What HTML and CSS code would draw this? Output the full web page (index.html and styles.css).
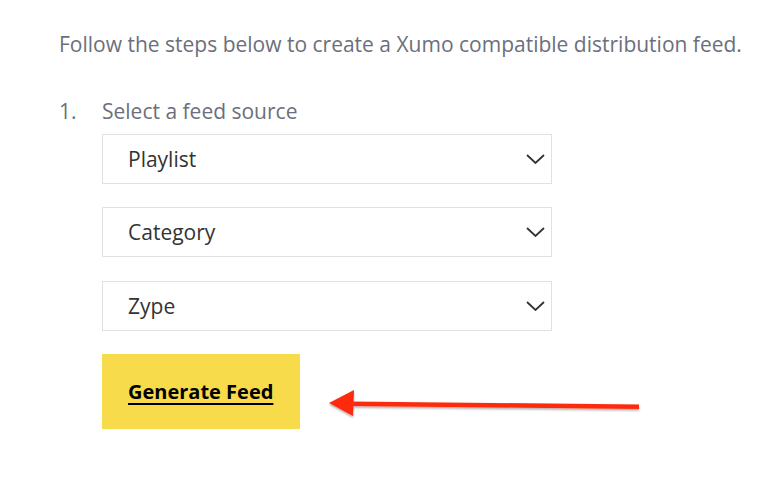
FILE: index.html
```html
<!DOCTYPE html>
<html lang="en">
<head>
<meta charset="utf-8">
<title>Xumo feed</title>
<link rel="stylesheet" href="styles.css">
</head>
<body>
<main class="page">
  <p class="intro">Follow the steps below to create a Xumo compatible distribution feed.</p>
  <ol class="steps">
    <li class="step">
      <span class="num">1.</span>
      <div class="step-body">
        <div class="label">Select a feed source</div>
        <div class="fields">
          <div class="select"><span>Playlist</span><svg class="chev" width="19" height="10" viewBox="0 0 19 10"><path d="M1 1 L9.5 9 L18 1" fill="none" stroke="#333" stroke-width="1.8"/></svg></div>
          <div class="select"><span>Category</span><svg class="chev" width="19" height="10" viewBox="0 0 19 10"><path d="M1 1 L9.5 9 L18 1" fill="none" stroke="#333" stroke-width="1.8"/></svg></div>
          <div class="select select-last"><span>Zype</span><svg class="chev" width="19" height="10" viewBox="0 0 19 10"><path d="M1 1 L9.5 9 L18 1" fill="none" stroke="#333" stroke-width="1.8"/></svg></div>
          <div class="actions"><button class="btn">Generate Feed</button></div>
        </div>
      </div>
    </li>
  </ol>
  <svg class="arrow" width="778" height="482" viewBox="0 0 778 482">
    <defs>
      <filter id="sh" x="-10%" y="-50%" width="120%" height="200%">
        <feDropShadow dx="0" dy="1.5" stdDeviation="1.2" flood-color="#000" flood-opacity="0.35"/>
      </filter>
    </defs>
    <g filter="url(#sh)" fill="#fe2a0c">
      <path d="M350 401.5 L639 404.5 L639 409 L350 406 Z"/>
      <path d="M329 403 L354 390 L353 416 Z"/>
    </g>
  </svg>
</main>
</body>
</html>
```

FILE: styles.css
```css
* { box-sizing: border-box; }
html, body { margin: 0; padding: 0; background: #fff; }
body { font-family: "Open Sans", "Liberation Sans", sans-serif; }
.page {
  position: relative;
  width: 778px;
  height: 482px;
  padding: 29px 0 0 59px;
  overflow: hidden;
}
.intro {
  margin: 0;
  font-size: 21px;
  line-height: 30px;
  color: #6b6f7b;
  white-space: nowrap;
}
.steps {
  list-style: none;
  margin: 37px 0 0;
  padding: 0;
}
.step {
  display: flex;
}
.num {
  width: 43px;
  font-size: 21px;
  line-height: 30px;
  color: #6b6f7b;
}
.label {
  font-size: 21px;
  line-height: 30px;
  color: #6b6f7b;
}
.fields {
  margin-top: 8px;
  display: flex;
  flex-direction: column;
  gap: 23px;
}
.select {
  width: 450px;
  height: 50px;
  border: 1px solid #e1e1e1;
  display: flex;
  align-items: center;
  justify-content: space-between;
  padding: 0 6px 0 25px;
  font-size: 21px;
  color: #333;
}
.select-last { margin-top: 1px; }
.chev { display: block; }
.btn {
  width: 198px;
  height: 75px;
  border: 0;
  background: #f7db4b;
  font-family: inherit;
  font-size: 20px;
  font-weight: 700;
  color: #000;
  text-decoration: underline;
  text-decoration-thickness: 2px;
  text-underline-offset: 4px;
  text-align: left;
  padding: 0 0 0 26px;
  cursor: pointer;
}
.arrow {
  position: absolute;
  left: 0;
  top: 0;
  pointer-events: none;
}
```
